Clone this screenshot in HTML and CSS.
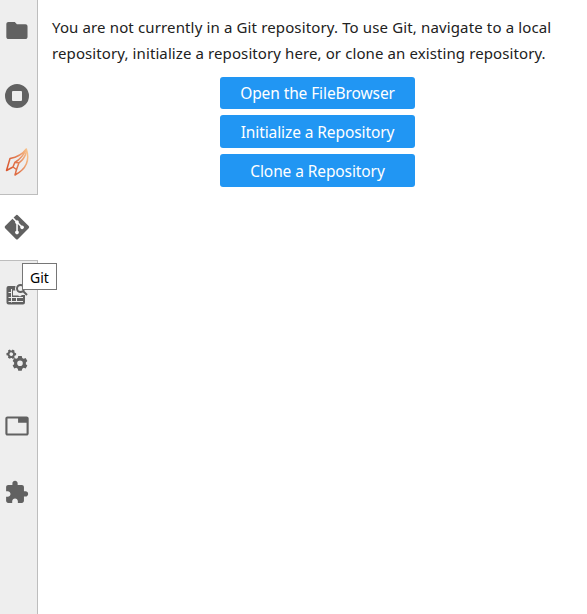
FILE: index.html
```
<!DOCTYPE html>
<html lang="en">
<head>
<meta charset="utf-8">
<title>Git</title>
<link rel="stylesheet" href="styles.css">
</head>
<body>
<div class="app">
  <nav class="sidebar">
    <div class="tab"><svg class="icon" viewBox="0 0 34 34"><path transform="translate(4.2 4.8) scale(1.06)" d="M10 4H4c-1.1 0-1.99.9-1.99 2L2 18c0 1.1.9 2 2 2h16c1.1 0 2-.9 2-2V8c0-1.1-.9-2-2-2h-8l-2-2z"/></svg></div>
    <div class="tab"><svg class="icon" viewBox="0 0 34 34"><path fill-rule="evenodd" d="M17 5a12 12 0 1 0 0 24a12 12 0 1 0 0-24zM13 12h8q1 0 1 1v8q0 1-1 1h-8q-1 0-1-1v-8q0-1 1-1z"/></svg></div>
    <div class="tab"><svg class="icon" viewBox="0 0 34 34">
      <defs><linearGradient id="flame" gradientUnits="userSpaceOnUse" x1="6" y1="20" x2="29" y2="14"><stop offset="0" stop-color="#d9572f"/><stop offset=".5" stop-color="#e27a50"/><stop offset="1" stop-color="#f7c089"/></linearGradient></defs>
      <g fill="none" stroke="url(#flame)" stroke-width="1.500" stroke-linejoin="round"><path d="M13 22L6.500 25.500L10 13.500Q21 11.500 26.300 4Q22.500 13 14.800 17.500L13 22L16.500 24.500L15 30Q32 21 26.300 4"/><path d="M14.800 17.500L19 17.800Q24.500 14 26.300 7M19 17.800L16.500 24.500"/></g></svg></div>
    <div class="tab active"><svg class="icon" viewBox="0 0 34 34"><path transform="translate(4.700 3.900) scale(.266)" d="M90.156 41.965 50.036 1.848a5.918 5.918 0 0 0-8.372 0l-8.328 8.332 10.566 10.566a7.03 7.03 0 0 1 7.23 1.684 7.034 7.034 0 0 1 1.669 7.277l10.187 10.184a7.028 7.028 0 0 1 7.278 1.672 7.04 7.04 0 0 1 0 9.957 7.05 7.05 0 0 1-9.965 0 7.044 7.044 0 0 1-1.528-7.66l-9.5-9.497V59.36a7.04 7.04 0 0 1 1.86 11.29 7.04 7.04 0 0 1-9.957 0 7.04 7.04 0 0 1 0-9.958 7.06 7.06 0 0 1 2.304-1.539V33.926a7.049 7.049 0 0 1-3.82-9.234L29.242 14.272 1.73 41.777a5.918 5.918 0 0 0 0 8.371L41.852 90.27a5.92 5.92 0 0 0 8.370 0l39.934-39.934a5.925 5.925 0 0 0 0-8.371"/></svg><div class="tooltip">Git</div></div>
    <div class="tab"><svg class="icon" viewBox="0 0 34 34"><path d="M8.500 9H15.500Q14.500 12 15.500 13.500H13V18.500H18L20 19.500L22 18H25V25.500Q25 27.500 23 27.500H8.500Q6.500 27.500 6.500 25.500V11Q6.500 9 8.500 9z"/><path fill="none" stroke="#eee" d="M11.500 12V25.500M8.500 15.500H11M8.500 20.500H23M8.500 24.500H23M16.500 20.500V24.500"/><g fill="none" stroke="#616161" stroke-width="2"><circle cx="20.500" cy="11.500" r="3.500"/><path d="M23 14L27 18"/></g></svg></div>
    <div class="tab"><svg class="icon" viewBox="0 0 34 34"><defs><path id="gear" fill-rule="evenodd" d="M-2.500-10.500H2.500L3.200-7.700L5.300-6.500L8.100-7.400L10.500-3.300L8.400-1.300V1.300L10.500 3.300L8.100 7.400L5.300 6.500L3.200 7.700L2.500 10.500H-2.500L-3.200 7.700L-5.300 6.500L-8.100 7.400L-10.500 3.300L-8.400 1.300V-1.300L-10.500-3.300L-8.100-7.400L-5.300-6.500L-3.200-7.700zM0-4A4 4 0 1 0 0 4A4 4 0 1 0 0-4z"/></defs><use href="#gear" transform="translate(11.300 11.200) rotate(30) scale(.45)"/><use href="#gear" transform="translate(20 20.300) scale(.7)"/></svg></div>
    <div class="tab"><svg class="icon" viewBox="0 0 34 34"><path transform="translate(4.300 4.300) scale(1.060)" d="M21 3H3c-1.100 0-2 .9-2 2v14c0 1.100.9 2 2 2h18c1.100 0 2-.9 2-2V5c0-1.100-.9-2-2-2zm0 16H3V5h10v4h8v10z"/></svg></div>
    <div class="tab"><svg class="icon" viewBox="0 0 34 34"><path transform="translate(4 4.800) scale(1.050)" d="M20.500 11H19V7c0-1.100-.9-2-2-2h-4V3.500C13 2.120 11.880 1 10.500 1S8 2.120 8 3.500V5H4c-1.100 0-1.990.9-1.990 2v3.800H3.500c1.490 0 2.700 1.210 2.700 2.700s-1.210 2.700-2.700 2.700H2V20c0 1.100.9 2 2 2h3.800v-1.500c0-1.490 1.210-2.700 2.700-2.700 1.490 0 2.700 1.210 2.700 2.700V22H17c1.100 0 2-.9 2-2v-4h1.500c1.380 0 2.500-1.120 2.500-2.500S21.880 11 20.500 11z"/></svg></div>
    <div class="rest"></div>
  </nav>
  <main class="panel">
    <p class="message"><span class="first">You are not currently in a Git repository. To use Git, navigate to a local</span><br><span class="second">repository, initialize a repository here, or clone an existing repository.</span></p>
    <div class="actions">
      <button class="open">Open the FileBrowser</button>
      <button>Initialize a Repository</button>
      <button>Clone a Repository</button>
    </div>
  </main>
</div>
</body>
</html>
```
FILE: styles.css
```
* { box-sizing: border-box; }
body { margin: 0; background: #fff; overflow: hidden; font-family: "Noto Sans", sans-serif; color: #212121; }
.app { display: flex; height: 614px; }
.sidebar { width: 38px; flex: none; display: flex; flex-direction: column; margin-top: -3px; }
.tab { height: 66px; flex: none; display: flex; align-items: center; background: #eee; border-right: 1px solid #bdbdbd; }
.active { position: relative; height: 67px; margin: -1px 0 0; background: #fff; border: solid #bdbdbd; border-width: 1px 0; }
.rest { flex: 1; background: #eee; border-right: 1px solid #bdbdbd; }
.icon { display: block; width: 34px; height: 34px; fill: #616161; }
.tooltip { position: absolute; z-index: 2; left: 22px; top: 68px; width: 35px; height: 27px; border: 1px solid #767676; background: #fff; font-size: 14px; line-height: 27px; text-align: center; color: #000; }
.panel { flex: 1; padding: 14px 0 0 14px; }
.message { margin: 0; font-size: 15px; line-height: 26px; white-space: nowrap; }
.first { letter-spacing: .137px; }
.second { letter-spacing: .1px; }
.actions { display: flex; flex-direction: column; gap: 6px; width: 195px; margin: 11px 0 0 168px; }
button { height: 33px; padding: 1px 0 0; border: 0; border-radius: 3px; background: #2196f3; color: #fff; font-family: "Noto Sans", sans-serif; font-size: 15.500px; letter-spacing: -.1px; line-height: 32px; white-space: nowrap; }
.open { height: 32px; padding: 0; }
```
